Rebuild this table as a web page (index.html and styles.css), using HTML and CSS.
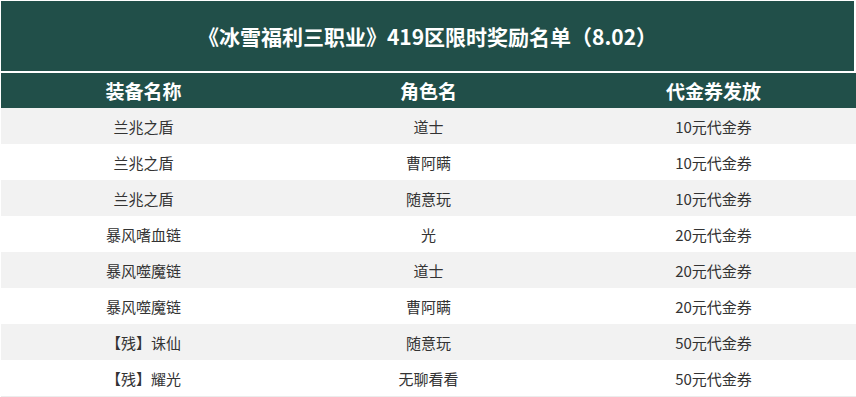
FILE: index.html
```html
<!DOCTYPE html>
<html lang="zh-CN">
<head>
  <meta charset="UTF-8">
  <meta name="viewport" content="width=device-width, initial-scale=1">
  <title>419区限时奖励名单</title>
  <link rel="stylesheet" href="styles.css">
</head>
<body>
  <div class="board">
    <h1 class="board-title">《冰雪福利三职业》419区限时奖励名单（8.02）</h1>
    <table class="reward-table">
      <thead>
        <tr>
          <th>装备名称</th>
          <th>角色名</th>
          <th>代金券发放</th>
        </tr>
      </thead>
      <tbody>
        <tr><td>兰兆之盾</td><td>道士</td><td>10元代金券</td></tr>
        <tr><td>兰兆之盾</td><td>曹阿瞒</td><td>10元代金券</td></tr>
        <tr><td>兰兆之盾</td><td>随意玩</td><td>10元代金券</td></tr>
        <tr><td>暴风嗜血链</td><td>光</td><td>20元代金券</td></tr>
        <tr><td>暴风噬魔链</td><td>道士</td><td>20元代金券</td></tr>
        <tr><td>暴风噬魔链</td><td>曹阿瞒</td><td>20元代金券</td></tr>
        <tr><td>【残】诛仙</td><td>随意玩</td><td>50元代金券</td></tr>
        <tr><td>【残】耀光</td><td>无聊看看</td><td>50元代金券</td></tr>
      </tbody>
    </table>
  </div>
</body>
</html>
```

FILE: styles.css
```css
body {
  margin: 0;
  background: #fff;
  font-family: "Noto Sans CJK SC", "Noto Sans", sans-serif;
  color: #333;
}
.board {
  padding: 1px 0 0 1px;
}
.board-title {
  margin: 0 2px 2px 0;
  height: 70px;
  display: flex;
  align-items: center;
  justify-content: center;
  background: #214f49;
  color: #fff;
  font-size: 21px;
  font-weight: 700;
}
.reward-table {
  width: 855px;
  border-collapse: collapse;
  table-layout: fixed;
}
.reward-table th {
  height: 35px;
  padding: 0;
  background: #214f49;
  color: #fff;
  font-size: 19px;
  font-weight: 700;
  text-align: center;
}
.reward-table td {
  height: 36px;
  padding: 0;
  font-size: 15px;
  text-align: center;
}
.reward-table tbody tr:nth-child(odd) {
  background: #f2f2f2;
}
.reward-table tbody tr:last-child {
  border-bottom: 1px solid #ececec;
}
```
